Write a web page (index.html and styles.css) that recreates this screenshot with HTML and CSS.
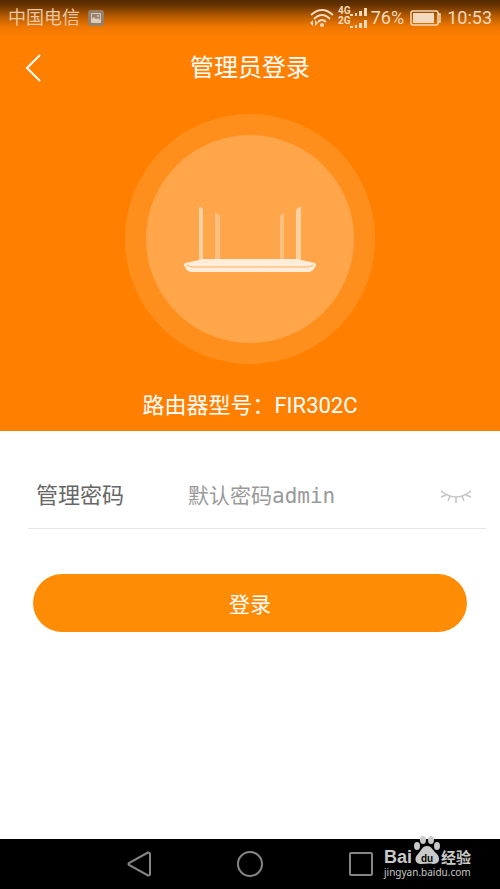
FILE: index.html
```html
<!DOCTYPE html>
<html lang="zh-CN">
<head>
<meta charset="utf-8">
<meta name="viewport" content="width=device-width, initial-scale=1">
<title>管理员登录</title>
<link rel="stylesheet" href="styles.css">
</head>
<body>
<div class="screen">
  <header class="hero">
    <div class="status">
      <span class="carrier">中国电信</span>
      <svg class="shot" width="16" height="16" viewBox="0 0 16 16" aria-hidden="true">
        <rect width="16" height="16" rx="3" fill="#94806a"/>
        <rect x="3" y="3" width="10" height="10" rx="1" fill="#e0cdb9"/>
        <path d="M4 4h8v6L10 8 8 9 6 7 4 9z" fill="#938373"/>
        <circle cx="10" cy="6" r="1" fill="#e0cdb9"/>
      </svg>
      <div class="indicators">
        <svg width="61" height="26" viewBox="0 0 61 26" aria-hidden="true">
          <g fill="none" stroke="#f3d9bd" stroke-width="2">
            <path d="M1 10q11-10 22 0M4 14q8-8 16 0M8 17q4-4 8 0"/>
          </g>
          <circle cx="12" cy="20" r="2" fill="#f3d9bd"/>
          <path d="M3 15v6l-3-3zM5 15v6l3-3z" fill="#f3d9bd"/>
          <g class="net" fill="#f3d9bd">
            <text x="28" y="9">4G</text>
            <text x="28" y="19">2G</text>
          </g>
          <path d="M40 9h3v2h-3zM45 8h2v3h-2zM49 6h3v5h-3zM54 3h3v8h-3zM40 21h3v2h-3zM45 20h2v3h-2zM49 18h3v5h-3zM54 15h3v8h-3z" fill="#f3d9bd"/>
        </svg>
        <span>76%</span>
        <svg class="battery" width="31" height="16" viewBox="0 0 31 16" aria-hidden="true">
          <rect x="1" y="1" width="27" height="14" rx="2" fill="none" stroke="#f3d9bd" stroke-width="1.5"/>
          <path d="M3 3h21v10H3z" fill="#f3d9bd"/>
          <path d="M28 4h2v8h-2" fill="none" stroke="#f3d9bd" stroke-width="1.5"/>
        </svg>
        <span>10:53</span>
      </div>
    </div>
    <div class="titlebar">
      <button class="back" type="button" aria-label="返回">
        <svg width="18" height="28" viewBox="0 0 18 28"><path d="M16 1 3 14l13 13" fill="none" stroke="#fff" stroke-width="2"/></svg>
      </button>
      <h1>管理员登录</h1>
    </div>
    <div class="halo">
      <div class="disc">
        <svg width="132" height="66" viewBox="0 0 132 66" aria-hidden="true">
          <path d="M15 55V1q4 0 4 4v50zM112 55V5q1-4 5-4v54z" fill="#ffd0a1"/>
          <path d="M31 54V7q4 0 5 4v43zM96 54V12q0-4 4-5v47z" fill="#ffbf80"/>
          <path d="M20 53h93l18 4q2 1 0 4-2 5-7 5H8q-5 0-7-5-2-3 0-4z" fill="#ffecd9"/>
          <path d="M3 59q2 2 6 2h114q4 0 6-2" fill="none" stroke="#ffad5b" stroke-width="1"/>
        </svg>
      </div>
    </div>
    <p class="model">路由器型号：FIR302C</p>
  </header>
  <main>
    <form class="login">
      <div class="field">
        <label for="pwd">管理密码</label>
        <input id="pwd" type="password" placeholder="默认密码admin">
        <button class="eye" type="button" aria-label="显示密码">
          <svg width="32" height="14" viewBox="0 0 32 14"><path d="M1 1q15 12 30 0M6 5 1 7M10 6l-2 5M16 7v6M22 6l2 5M26 5l5 2" fill="none" stroke="#c4c4c4" stroke-width="1.5"/></svg>
        </button>
      </div>
      <button class="submit" type="button">登录</button>
    </form>
  </main>
  <nav class="sysnav">
    <button type="button" aria-label="后退"><svg width="26" height="26" viewBox="0 0 26 26"><path d="M22 1.500 3 12q-1 1 0 2l19 10.500q2 0 2-1.500V3q0-1.500-2-1.500z"/></svg></button>
    <button type="button" aria-label="主页"><svg width="26" height="26" viewBox="0 0 26 26"><circle cx="13" cy="13" r="12"/></svg></button>
    <button type="button" aria-label="最近任务"><svg width="26" height="26" viewBox="0 0 26 26"><rect x="2" y="2" width="22" height="22" rx="1"/></svg></button>
    <div class="mark">
      <svg width="90" height="50" viewBox="0 0 90 50" role="img" aria-label="Baidu 经验">
        <g fill="#c9c9c9">
          <text class="bai" x="0" y="28">Bai</text>
          <ellipse cx="33" cy="11" rx="3" ry="4"/>
          <ellipse cx="39" cy="5" rx="3" ry="4"/>
          <ellipse cx="47" cy="5" rx="3" ry="4"/>
          <ellipse cx="53" cy="11" rx="3" ry="4"/>
          <path d="M43 11c-5 0-6 5-9 8-5 5-2 10 3 10 4 0 8-1 12 0 6 0 8-5 4-10-4-3-5-8-10-8z"/>
          <text class="jy" x="57" y="28">经验</text>
        </g>
        <text class="du" x="37" y="27">du</text>
        <text class="url" x="0" y="41">jingyan.baidu.com</text>
      </svg>
    </div>
  </nav>
</div>
</body>
</html>
```
FILE: styles.css
```css
* { box-sizing: border-box; }
body {
  margin: 0;
  background: #fff;
  font-family: Roboto, "Noto Sans CJK SC", sans-serif;
}
button {
  border: 0;
  padding: 0;
  background: none;
  font: inherit;
  cursor: pointer;
}
svg { display: block; }
.screen {
  min-height: 100vh;
  display: flex;
  flex-direction: column;
}
.hero {
  display: flex;
  flex-direction: column;
  align-items: center;
  padding-bottom: 10px;
  background: linear-gradient(#522900 0, #6b3500 6px, #b55a00 16px, #ec7600 26px, #ff8000 36px) #ff8000;
}
.status {
  width: 100%;
  height: 36px;
  padding: 0 8px;
  display: flex;
  align-items: center;
  gap: 8px;
  color: #f3d9bd;
  font-size: 18px;
  line-height: 36px;
}
.carrier { color: #e8c8a8; }
.indicators {
  margin-left: auto;
  display: flex;
  align-items: center;
}
.indicators svg { overflow: visible; }
.battery { margin: 0 6px; }
.net {
  font: bold 10px Roboto, sans-serif;
}
.titlebar {
  width: 100%;
  height: 64px;
  display: grid;
  grid-template-columns: 66px 1fr 66px;
  align-items: center;
}
.back {
  height: 62px;
  display: grid;
  place-items: center;
}
h1 {
  margin: 0;
  color: #fff;
  font-size: 24px;
  font-weight: 400;
  line-height: 36px;
  text-align: center;
}
.halo {
  width: 250px;
  height: 250px;
  margin-top: 14px;
  display: grid;
  place-items: center;
  border-radius: 50%;
  background: #ff8f1c;
}
.disc {
  width: 208px;
  height: 208px;
  display: grid;
  place-items: center;
  border-radius: 50%;
  background: #ffa54a;
}
.model {
  margin: 26px 0 0;
  color: #fff;
  font-size: 22px;
  line-height: 31px;
}
main {
  flex: 1;
  padding: 34px 14px 34px 28px;
}
.field {
  height: 64px;
  padding: 0 14px 0 8px;
  display: flex;
  align-items: center;
  border-bottom: 1px solid #e6e6e6;
}
.field label {
  width: 152px;
  padding-bottom: 8px;
  color: #666;
  font-size: 22px;
}
.field input {
  flex: 1;
  min-width: 0;
  padding: 0 0 2px;
  border: 0;
  outline: 0;
  color: #666;
  background: none;
  font: 21px "DejaVu Sans Mono", "Noto Sans CJK SC", monospace;
}
.field input::placeholder {
  color: #999;
  opacity: 1;
}
.submit {
  display: block;
  width: calc(100% - 24px);
  height: 58px;
  margin: 45px 0 0 5px;
  border-radius: 29px;
  color: #fff;
  background: #ff8c05;
  font-size: 21px;
}
.sysnav {
  position: relative;
  height: 50px;
  padding: 0 16.7%;
  display: grid;
  grid-template-columns: repeat(3, 1fr);
  place-items: center;
  background: #000;
}
.sysnav button svg {
  fill: none;
  stroke: #858585;
  stroke-width: 2;
}
.mark {
  position: absolute;
  right: 26px;
  bottom: 4px;
}
.mark svg { overflow: visible; }
.bai { font: bold 18px "Liberation Sans", sans-serif; }
.jy { font: bold 15px "Noto Sans CJK SC", sans-serif; }
.du { font: bold 10px "Liberation Sans", sans-serif; fill: #000; }
.url { font: 10px "Noto Sans", sans-serif; fill: #c9c9c9; }
```
